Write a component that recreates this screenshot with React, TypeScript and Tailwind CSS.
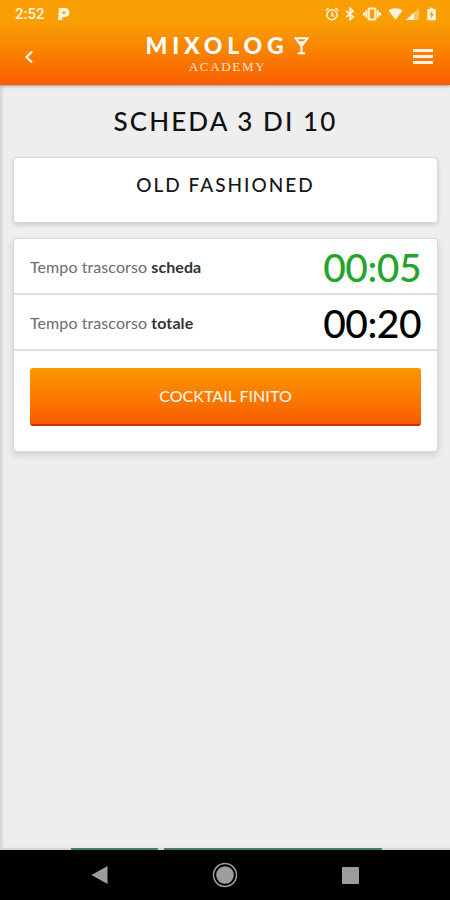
import React from 'react';

interface TimerRowProps {
  label: string;
  time: string;
  timeClass: string;
}

const StatusBar: React.FC = () => (
  <div className="flex h-7 items-center justify-between pl-[15px] pr-[14px] text-[#fff3df]">
    <div className="flex items-center">
      <span className="w-[48px] font-[Roboto] text-[15px] font-medium leading-7">2:52</span>
      <svg className="-ml-[5px]" width="12" height="12" viewBox="0 0 12 12" fill="currentColor">
        <path fillRule="evenodd" d="M1 0h6a4.400 4.400 0 0 1 0 9H4.800L4 12H0zM4.600 3.500 4.200 5.800H6.800a1.200 1.200 0 0 0 0-2.300z" />
      </svg>
    </div>
    <div className="flex items-center">
      {/* alarm */}
      <svg width="14" height="14" viewBox="0 0 14 14" fill="none" stroke="currentColor" strokeWidth="1.5">
        <circle cx="7" cy="7.8" r="5" />
        <path d="M.8 3.4 3.6 1M13.2 3.4 10.4 1M7 5v3l2.1 1.5" />
      </svg>
      {/* bluetooth */}
      <svg className="ml-[6px]" width="10" height="14" viewBox="0 0 10 14" fill="none" stroke="currentColor" strokeWidth="1.6">
        <path d="m1 3.9 7.2 6L5 12.8V1.2l3.2 2.9-7.2 6" />
      </svg>
      {/* vibrate */}
      <svg className="ml-[8px]" width="18" height="14" viewBox="0 0 18 14" fill="none" stroke="currentColor">
        <rect x="5.6" y="1.5" width="6.8" height="11" rx="1" strokeWidth="2.2" />
        <path d="M3.2 3.6v6.8M14.8 3.6v6.8M1 5.5v3M17 5.5v3" strokeWidth="2" />
      </svg>
      {/* wifi */}
      <svg className="ml-[7px]" width="15" height="12" viewBox="0 0 15 12" fill="currentColor">
        <path d="M.4 2.6C4.8-.4 10.2-.4 14.6 2.6L7.500 11.700z" />
      </svg>
      {/* signal */}
      <svg className="ml-[3px]" width="13" height="12" viewBox="0 0 13 12" fill="currentColor">
        <path d="M0 12 13 0v12z" opacity=".45" />
        <path d="M0 12 8 4.600V12z" />
      </svg>
      {/* battery */}
      <svg className="ml-[8px]" width="9" height="14" viewBox="0 0 9 14" fill="currentColor">
        <path fillRule="evenodd" d="M2.8.7h3.4v1.2H8q.8 0 .8.8v9.8q0 .8-.8.8H1q-.8 0-.8-.8V2.700q0-.8.8-.8h1.800zM5.200 4 2.300 8.200h1.800v3L6.800 7H5.200z" />
      </svg>
    </div>
  </div>
);

const Logo: React.FC = () => (
  <div className="-mt-[4px] mr-[11px] flex w-[164px] flex-col items-center text-white">
    <div className="flex h-[20px] w-full items-center">
      <span className="w-[148px] whitespace-nowrap text-[23px] font-black leading-[20px] tracking-[4.8px]">MIXOLOG</span>
      <svg className="mt-[2px] shrink-0" width="15" height="18" viewBox="0 0 15 18" fill="none" stroke="currentColor" strokeWidth="2">
        <path d="M1.600 1.300h11.800L7.500 9.300zM7.500 9.300v7M3.800 16.300h7.400" />
        <path d="M4.600 4.200h5.800L7.500 8.200z" fill="currentColor" stroke="none" />
      </svg>
    </div>
    <span className="mt-[4px] font-['Liberation_Serif'] text-[13px] leading-[15px] tracking-[1.7px] text-[#ffe4cf]">ACADEMY</span>
  </div>
);

const Header: React.FC = () => (
  <header className="h-[85px] shrink-0 bg-linear-to-b from-[#f99f03] from-25% to-[#f85c00] shadow-[0_1px_3px_rgba(0,0,0,0.35)]">
    <StatusBar />
    <div className="flex h-[57px] items-center justify-between pl-[24px] pr-[17px]">
      <button aria-label="Indietro" className="w-[29px] text-[#fff3e8]">
        <svg width="10" height="14" viewBox="0 0 10 14" fill="none" stroke="currentColor" strokeWidth="2.4">
          <path d="M8 1.500 2.600 7 8 12.500" />
        </svg>
      </button>
      <Logo />
      <button aria-label="Menu" className="flex w-[20px] flex-col gap-[3px]">
        <span className="h-[3px] bg-[#fff0e4]" />
        <span className="h-[3px] bg-[#fff0e4]" />
        <span className="h-[3px] bg-[#fff0e4]" />
      </button>
    </div>
  </header>
);

const TimerRow: React.FC<TimerRowProps> = ({ label, time, timeClass }) => (
  <div className="flex h-[56px] items-center justify-between border-b-2 border-[#dedede] px-4 pt-[2px]">
    <p className="text-[16px] tracking-[0.08px] text-[#6b6b70]">
      Tempo trascorso <strong className="font-bold text-[#333336]">{label}</strong>
    </p>
    <span className={`text-[39px] font-medium leading-none tracking-[-0.5px] ${timeClass}`}>{time}</span>
  </div>
);

const NavigationBar: React.FC = () => (
  <nav className="flex h-[50px] shrink-0 items-center bg-black pl-[91px] text-[#9d9d9d]">
    <svg width="17" height="18" viewBox="0 0 17 18" fill="currentColor">
      <path d="M.5 9 16.500 0v18z" />
    </svg>
    <svg className="ml-[104px]" width="26" height="26" viewBox="0 0 26 26" fill="currentColor">
      <circle cx="13" cy="13" r="11.500" fill="none" stroke="currentColor" strokeWidth="1.500" />
      <circle cx="13" cy="13" r="8.800" />
    </svg>
    <div className="ml-[104px] h-[17px] w-[17px] rounded-[1px] bg-current" />
  </nav>
);

const App: React.FC = () => {
  return (
    <div className="flex h-[900px] w-[450px] flex-col overflow-hidden bg-[#eeeeee] font-[Lato,sans-serif]">
      <Header />
      <main className="flex-1 pl-[13px] pr-[12px] shadow-[inset_3px_0_3px_-1px_rgba(0,0,0,0.12)]">
        <h1 className="pt-[20px] text-center text-[26px] font-medium leading-[32px] tracking-[2.1px] text-[#111111]">
          SCHEDA 3 DI 10
        </h1>
        <section className="mt-[20px] h-[66px] rounded-[4px] border border-[#d8d8d8] bg-white pt-[15px] text-center shadow-[0_2px_4px_rgba(0,0,0,0.14)]">
          <h2 className="text-[19px] font-medium leading-6 tracking-[2px] text-[#161616]">OLD FASHIONED</h2>
        </section>
        <section className="mt-[15px] h-[214px] rounded-[4px] border border-[#d8d8d8] bg-white shadow-[0_3px_7px_rgba(0,0,0,0.14)]">
          <TimerRow label="scheda" time="00:05" timeClass="text-[#23a52b]" />
          <TimerRow label="totale" time="00:20" timeClass="text-black" />
          <div className="px-4 pt-[17px]">
            <button className="h-[58px] w-full rounded-[3px] border-b-2 border-[#c83200] bg-linear-to-b from-[#fa9700] to-[#f85b00] text-[16px] font-medium text-[#fff0e3]">
              COCKTAIL FINITO
            </button>
          </div>
        </section>
      </main>
      <div className="flex h-[2px] shrink-0 bg-[#d8d8d8] pl-[71px]">
        <div className="h-[2px] w-[87px] bg-[#3f7f6d]" />
        <div className="ml-[6px] h-[2px] w-[218px] bg-[#3f7f6d]" />
      </div>
      <NavigationBar />
    </div>
  );
};

export default App;
